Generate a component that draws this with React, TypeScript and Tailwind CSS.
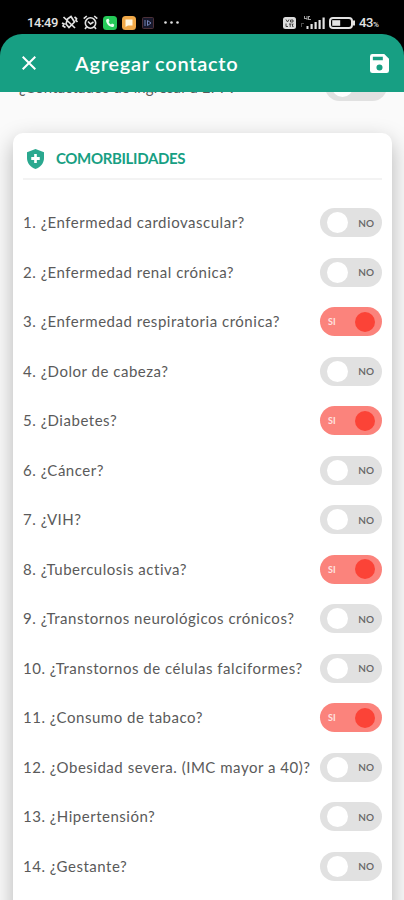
import type { ReactNode } from 'react'

// ── Data ──

const questions: { label: string; on?: boolean }[] = [
  { label: '1. ¿Enfermedad cardiovascular?' },
  { label: '2. ¿Enfermedad renal crónica?' },
  { label: '3. ¿Enfermedad respiratoria crónica?', on: true },
  { label: '4. ¿Dolor de cabeza?' },
  { label: '5. ¿Diabetes?', on: true },
  { label: '6. ¿Cáncer?' },
  { label: '7. ¿VIH?' },
  { label: '8. ¿Tuberculosis activa?', on: true },
  { label: '9. ¿Transtornos neurológicos crónicos?' },
  { label: '10. ¿Transtornos de células falciformes?' },
  { label: '11. ¿Consumo de tabaco?', on: true },
  { label: '12. ¿Obesidad severa. (IMC mayor a 40)?' },
  { label: '13. ¿Hipertensión?' },
  { label: '14. ¿Gestante?' },
]

// ── Status Bar ──

function StatusBar() {
  return (
    <div className="flex h-[34px] shrink-0 items-center bg-black pl-[27px] pr-[25px] pt-[11px] font-['Roboto',sans-serif] text-[13px] font-medium leading-none text-[#e2e2e2]">
      <span className="w-[33px] whitespace-nowrap tracking-[-0.4px]">14:49</span>
      {/* vibrate */}
      <svg className="ml-px h-[15px] w-[17px]" viewBox="0 0 17 15" fill="none" stroke="currentColor" strokeWidth="1.7">
        <path d="M6.500 4 10 1.500l3.500 5.500L8 12.500l-3-3.500zM2.500 2l11.500 11M1 8l2 1-1 2 2.500 1.500M13.500 2l2 1.500-.5 2 1.500 1.500" />
      </svg>
      {/* alarm */}
      <svg className="ml-[5px] h-[15px] w-[15px]" viewBox="0 0 15 15" fill="none" stroke="currentColor" strokeWidth="1.600">
        <circle cx="7.500" cy="8" r="5.200" />
        <path d="M.7 3.700 3.800 1M14.300 3.700 11.200 1M5 6.500 7.500 9l3-2M3.500 12 2 14M11.500 12l1.500 2" />
      </svg>
      {/* phone app */}
      <svg className="ml-[5px] h-[14px] w-[14px]" viewBox="0 0 14 14">
        <rect width="14" height="14" rx="3.500" fill="#25c958" />
        <path d="M4.300 3 5.600 2.800l.9 2.200-.9 1c.5 1.200 1.200 1.900 2.400 2.400l1-.9 2.200.9-.2 1.500c-.2.700-1 1.100-1.700 1C6 10.500 3.500 8 3.100 4.700c0-.8.500-1.500 1.200-1.700z" fill="#eafff0" />
      </svg>
      {/* messages app */}
      <svg className="ml-[5px] h-[14px] w-[14px]" viewBox="0 0 14 14">
        <rect width="14" height="14" rx="3.500" fill="#f0a848" />
        <path d="M3.500 3.500h7v6H6L3.500 11z" fill="#fff6df" />
      </svg>
      {/* video app */}
      <svg className="ml-[6px] h-[12px] w-[12px]" viewBox="0 0 12 12" fill="none">
        <rect x=".5" y=".5" width="11" height="11" rx="1" fill="#17182b" stroke="#4b3038" />
        <path d="M3 3v6M5.500 3.500 9 6 5.500 8.500z" stroke="#7384b8" />
      </svg>
      <svg className="ml-[10px] h-[3px] w-[15px]" viewBox="0 0 15 3" fill="currentColor">
        <circle cx="1.500" cy="1.500" r="1.300" />
        <circle cx="7.500" cy="1.500" r="1.300" />
        <circle cx="13.500" cy="1.500" r="1.300" />
      </svg>
      <div className="flex-1" />
      {/* volte */}
      <svg className="h-3 w-[13px]" viewBox="0 0 13 12">
        <rect width="13" height="12" rx="2.500" fill="#dcdcdc" />
        <path d="M3 2.500 4.500 5 6 2.500M7.500 3h2.500v2H7.500zM3 6.500v3h2M6 7h2.500M7.200 7v3M10.500 7H9.500v2.500h1" fill="none" stroke="#333" strokeWidth=".9" />
      </svg>
      {/* signal */}
      <svg className="ml-[5px] h-[13px] w-[24px]" viewBox="0 0 24 13" fill="currentColor">
        <path d="M3 0h1v2h1.500V0h1v4h-1V3H3zM7 0h2v1H8v2h2v1H7z" opacity=".7" />
        <path d="M0 7h3v1H1v3H0z" opacity=".35" />
        <path d="M5.500 10h2v3h-2zM9.500 8h2.200v5H9.500zM13.500 6h2.200v7h-2.200zM17.500 4h2.200v9h-2.200zM21.500 1.500h2.200V13h-2.200z" />
      </svg>
      {/* battery */}
      <svg className="ml-[4px] h-3 w-[27px]" viewBox="0 0 27 12" fill="none">
        <rect x="1" y="1" width="22" height="10" rx="3" stroke="currentColor" strokeWidth="2" />
        <rect x="3.200" y="3.200" width="8" height="5.600" fill="currentColor" />
        <path d="M25 3.500v5" stroke="currentColor" strokeWidth="2" />
      </svg>
      <span className="ml-[3px] w-[20px] whitespace-nowrap tracking-[-0.4px]">43<span className="text-[8px]">%</span></span>
    </div>
  )
}

// ── App Bar ──

function AppBar() {
  return (
    <div className="z-10 shrink-0 bg-black">
      <header className="flex h-[58px] items-center rounded-t-[22px] bg-[#179f83] pl-[22px] pr-[15px] text-white">
        <svg className="h-[14px] w-[14px]" viewBox="0 0 14 14" fill="none" stroke="currentColor" strokeWidth="2">
          <path d="m.7.7 12.600 12.600M13.300.7.7 13.300" />
        </svg>
        <h1 className="ml-[39px] flex-1 whitespace-nowrap text-[20px] font-semibold tracking-[0.72px]">Agregar contacto</h1>
        <svg className="h-[19px] w-[19px]" viewBox="0 0 20 20" fill="currentColor" fillRule="evenodd">
          <path d="M2.500 0H15l5 5v12.500a2.500 2.500 0 0 1-2.500 2.500h-15A2.500 2.500 0 0 1 0 17.500v-15A2.500 2.500 0 0 1 2.500 0zM3 3v3.500h10.500V3zM10 11a3.200 3.200 0 1 0 0 6.400 3.200 3.200 0 0 0 0-6.400z" />
        </svg>
      </header>
    </div>
  )
}

// ── Switch ──

function Switch({ on = false }: { on?: boolean }) {
  return on ? (
    <button role="switch" aria-checked="true" className="flex h-[29px] w-[62px] shrink-0 items-center justify-between rounded-full bg-[#fb837c] pl-2 pr-[7px]">
      <span className="text-[9px] font-bold leading-none text-[#ffe3e1]">SI</span>
      <span className="size-5 rounded-full bg-[#fb4337]" />
    </button>
  ) : (
    <button role="switch" aria-checked="false" className="flex h-[29px] w-[62px] shrink-0 items-center justify-between rounded-full bg-[#e1e1e1] pl-[7px] pr-2">
      <span className="size-[21px] rounded-full bg-white" />
      <span className="text-[10px] font-semibold leading-none text-[#666]">NO</span>
    </button>
  )
}

// ── Question Row ──

function Row({ children, on }: { children: ReactNode; on?: boolean }) {
  return (
    <li className="flex h-[49.5px] items-center justify-between">
      <span className="-mt-px whitespace-nowrap text-[15px] tracking-[0.52px] text-[#5a5a5a]">{children}</span>
      <Switch on={on} />
    </li>
  )
}

export default function App() {
  return (
    <div className="flex h-[900px] w-[404px] flex-col overflow-hidden bg-[#fafafa] font-['Lato',sans-serif]">
      <StatusBar />
      <AppBar />
      <main className="flex-1 overflow-hidden">
        <div className="-mt-[20px] flex h-[29px] items-center justify-between pl-[19px] pr-[17px]">
          <span className="mt-[2px] whitespace-nowrap text-[15px] tracking-[0.1px] text-[#5a5a5a]">¿Contactados de ingresar a EPP?</span>
          <Switch />
        </div>
        <section className="ml-[13px] mr-3 mt-[32px] h-[800px] rounded-t-[10px] bg-white pl-[10px] pr-[10px] shadow-[0_8px_22px_rgba(0,0,0,0.28)]">
          <div className="flex h-[47px] items-center border-b-2 border-[#f3f3f3] pt-[6px] text-[#179f83]">
            <svg className="ml-[4px] h-5 w-[17px]" viewBox="0 0 18 20" preserveAspectRatio="none">
              <path d="M9 0 18 3.200V9c0 5-3.500 9.300-9 11C3.500 18.300 0 14 0 9V3.200z" fill="#2aa88f" />
              <path d="M9 5v9M4.500 9.500h9" stroke="#fff" strokeWidth="2.800" />
            </svg>
            <h2 className="ml-3 text-[15px] font-bold tracking-[-0.35px]">COMORBILIDADES</h2>
          </div>
          <ul className="pt-[18px]">
            {questions.map(({ label, on }) => (
              <Row key={label} on={on}>{label}</Row>
            ))}
          </ul>
        </section>
      </main>
    </div>
  )
}
